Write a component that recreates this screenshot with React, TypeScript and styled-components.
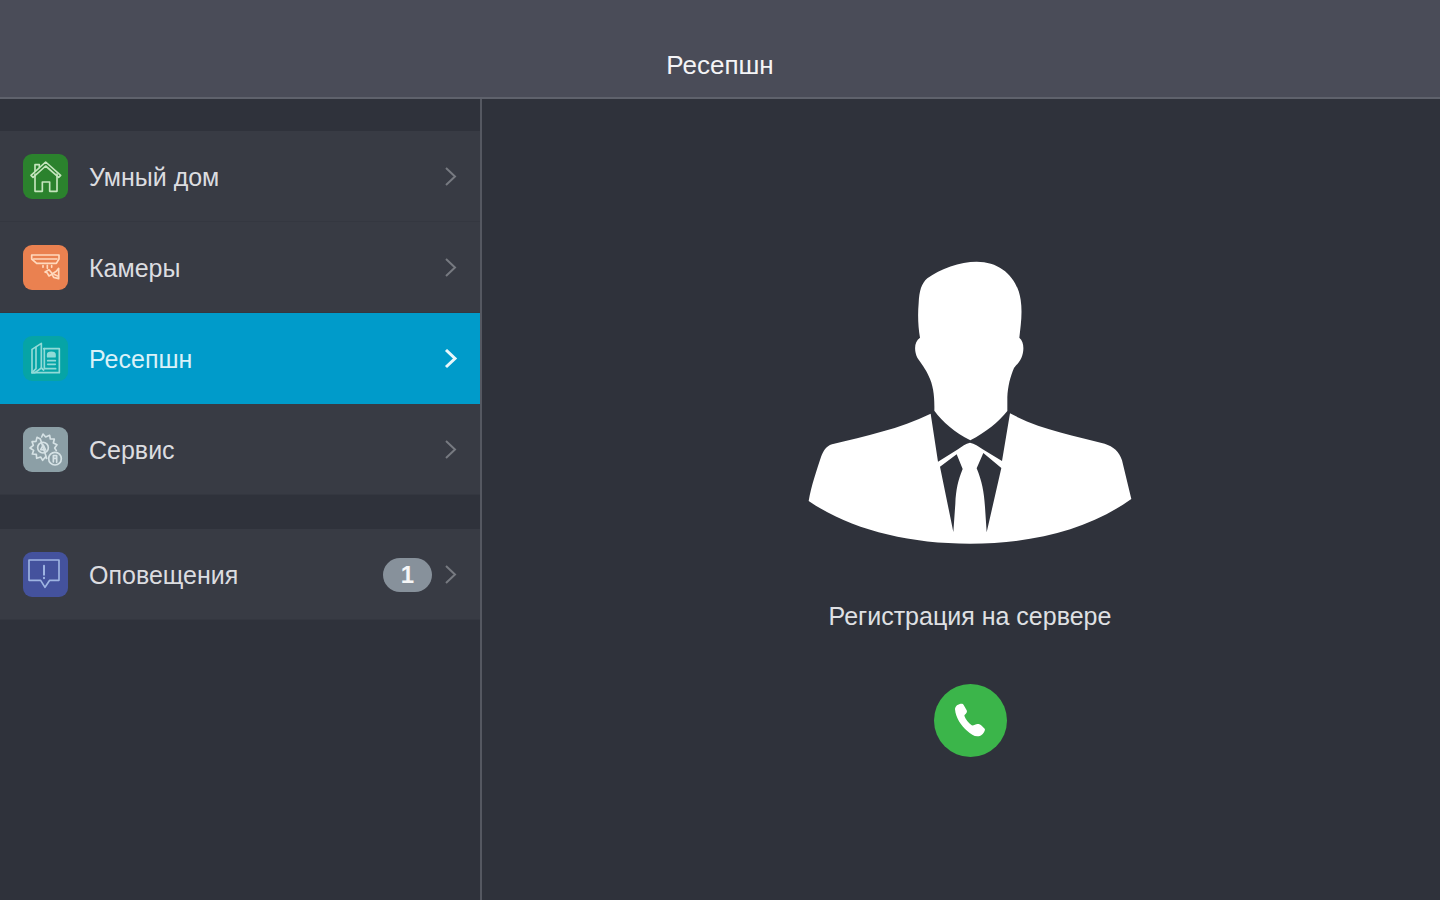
import React from "react";
import styled, { createGlobalStyle } from "styled-components";

const GlobalStyle = createGlobalStyle`
  *, *::before, *::after { box-sizing: border-box; }
  body {
    margin: 0;
    background: #2f323b;
    color: #dfe0e3;
    font-family: "Liberation Sans", Arial, sans-serif;
    font-size: 25px;
    line-height: 32px;
  }
`;

const Screen = styled.div`
  display: flex;
  flex-direction: column;
  min-height: 100vh;
`;

const Header = styled.header`
  display: flex;
  justify-content: center;
  padding: 49px 16px 16px;
  background: #4a4c58;
  border-bottom: 2px solid #5f626c;
`;

const Title = styled.h1`
  margin: 0;
  font-size: 26px;
  line-height: 32px;
  font-weight: 400;
  color: #f4f4f6;
`;

const Body = styled.div`
  display: grid;
  grid-template-columns: 1fr 2fr;
  flex: 1;
`;

const Sidebar = styled.nav`
  display: flex;
  flex-direction: column;
  gap: 34px;
  padding-top: 32px;
`;

const Menu = styled.ul`
  margin: 0;
  padding: 0;
  list-style: none;
`;

const MenuLink = styled.a<{ $active?: boolean }>`
  display: flex;
  align-items: center;
  height: 91px;
  padding: 0 22px 0 23px;
  text-decoration: none;
  color: ${(p) => (p.$active ? "#d9f1f8" : "#dcdde0")};
  background: ${(p) => (p.$active ? "#009bca" : "#383b44")};
  box-shadow: ${(p) => (p.$active ? "none" : "inset 0 -1px #343740")};
`;

const Tile = styled.svg<{ $color: string }>`
  flex: none;
  width: 45px;
  height: 45px;
  border-radius: 9px;
  background: ${(p) => p.$color};
  fill: none;
  stroke-linejoin: round;
  stroke-linecap: round;
`;

const Label = styled.span`
  flex: 1;
  margin-left: 21px;
`;

const Badge = styled.span`
  min-width: 49px;
  height: 34px;
  margin-right: 12px;
  border-radius: 17px;
  background: #87919b;
  color: #f5f6f7;
  font-size: 24px;
  line-height: 34px;
  font-weight: 700;
  text-align: center;
`;

const Chevron = styled.svg<{ $active?: boolean }>`
  flex: none;
  width: 14px;
  height: 20px;
  fill: none;
  stroke: ${(p) => (p.$active ? "#e8f7fb" : "#777a81")};
  stroke-width: ${(p) => (p.$active ? 3 : 2)};
`;

const Panel = styled.main`
  display: flex;
  flex-direction: column;
  align-items: center;
  padding: 162px 0 40px 18px;
  border-left: 2px solid #555861;
`;

const Avatar = styled.svg`
  width: 324px;
  height: 284px;
`;

const Status = styled.p`
  margin: 55px 0 52px;
`;

const CallButton = styled.button`
  width: 73px;
  height: 73px;
  padding: 0;
  border: 0;
  border-radius: 50%;
  background: #3bb54a;
  cursor: pointer;

  svg {
    display: block;
    width: 73px;
    height: 73px;
  }
`;

const HomeIcon = () => (
  <Tile $color="#2b822d" viewBox="24 24 135 135" stroke="#c5e5bd" strokeWidth="5" aria-hidden="true">
    <path d="M60 84V136H82V108H104V136H126V84" />
    <path d="M48 88L92 48L137 88L131 94L92 60L54 94Z" />
    <path d="M60 76V56H73V64" />
  </Tile>
);

const CameraIcon = () => (
  <Tile $color="#ea8150" viewBox="24 24 135 135" stroke="#ffd9bd" strokeWidth="5" aria-hidden="true">
    <path d="M50 54H132V66L124 79H65L50 66Z" />
    <path d="M56 66H126" />
    <path d="M84 86V91M97 85V94M110 86V91" />
    <path d="M90 105L102 98L112 110L124 103L131 94V125L116 121L111 112L102 117L96 107Z" />
    <path d="M117 112L128 117" />
  </Tile>
);

const ReceptionIcon = () => (
  <Tile $color="#06a4a6" viewBox="24 24 135 135" stroke="#91dad7" strokeWidth="5" aria-hidden="true">
    <path d="M51 64L79 46V120L60 134H51Z" />
    <path d="M63 58V122L51 134M79 120L86 126" />
    <path d="M86 62H133V134H52" />
    <path d="M88 62V122H122" />
    <path d="M98 80C98 71 120 71 120 80V86H98Z" fill="#91dad7" />
    <path d="M98 98H121M98 109H121" />
  </Tile>
);

const ServiceIcon = () => (
  <Tile $color="#8c9fa6" viewBox="24 24 135 135" stroke="#d6e2e5" strokeWidth="5" aria-hidden="true">
    <path d="M80 54L84 45L92 54L104 49L106 60L118 60L115 72L126 77L119 87L124 95M95 118L91 114L83 124L77 114L65 118L64 106L52 105L56 94L45 87L55 79L51 68L63 67L66 55L76 60Z" />
    <circle cx="84" cy="86" r="16" />
    <path d="M77 92L85 78L92 93Z" />
    <circle cx="120" cy="119" r="19" />
    <path d="M115 110V129M115 110H125V118H115M125 118V130" />
  </Tile>
);

const AlertIcon = () => (
  <Tile $color="#44529d" viewBox="24 24 135 135" stroke="#9eb4e2" strokeWidth="5" aria-hidden="true">
    <path d="M42 48H132V109H104L90 130L77 109H42Z" />
    <path d="M87 65V92M87 101V103" strokeWidth="6" />
  </Tile>
);

type ItemProps = {
  icon: React.ReactNode;
  label: string;
  href: string;
  active?: boolean;
  badge?: number;
};

const MenuItem = ({ icon, label, href, active, badge }: ItemProps) => (
  <li>
    <MenuLink href={href} $active={active} aria-current={active ? "page" : undefined}>
      {icon}
      <Label>{label}</Label>
      {badge !== undefined && <Badge>{badge}</Badge>}
      <Chevron $active={active} viewBox="0 0 14 20" aria-hidden="true">
        <path d="M2 1L11 9.500L2 18" />
      </Chevron>
    </MenuLink>
  </li>
);

export default function App() {
  return (
    <>
      <GlobalStyle />
      <Screen>
        <Header>
          <Title>Ресепшн</Title>
        </Header>
        <Body>
          <Sidebar>
            <Menu>
              <MenuItem icon={<HomeIcon />} label="Умный дом" href="#home" />
              <MenuItem icon={<CameraIcon />} label="Камеры" href="#cameras" />
              <MenuItem icon={<ReceptionIcon />} label="Ресепшн" href="#reception" active />
              <MenuItem icon={<ServiceIcon />} label="Сервис" href="#service" />
            </Menu>
            <Menu>
              <MenuItem icon={<AlertIcon />} label="Оповещения" href="#alerts" badge={1} />
            </Menu>
          </Sidebar>
          <Panel>
            <Avatar viewBox="24 32 972 852" fill="#ffffff" aria-hidden="true">
              <path d="M530 34C603 34 652 82 662 148C668 188 662 226 658 262C673 274 673 302 664 323C658 337 649 344 642 353C631 378 623 410 622 440V482C596 515 558 545 511 570C464 546 428 515 403 481C404 438 400 405 386 377C378 357 362 337 352 322C342 301 342 274 360 262C354 228 353 193 356 158C358 122 364 100 382 84C420 55 480 34 530 34Z" />
              <path d="M392 490L414 634L474 597C486 588 497 580 510 577C523 580 536 588 548 597L606 632L630 489C722 538 822 556 914 580C940 588 958 604 966 630L994 746C868 836 700 880 510 880C318 880 150 836 26 752C34 706 50 660 63 620C70 602 78 588 96 582C196 556 300 536 392 490ZM420 649L460 845L466 760C468 718 474 690 488 656L470 612ZM550 608L530 654C546 694 552 724 555 770L560 846L604 653Z" fillRule="evenodd" />
            </Avatar>
            <Status>Регистрация на сервере</Status>
            <CallButton type="button" aria-label="Позвонить">
              <svg viewBox="400 282 219 219" fill="#ffffff" aria-hidden="true">
                <path d="M463 358C463 348 472 341 484 341Q487 341 489 345L498 361C501 368 495 371 491 377C495 388 503 398 513 406C520 407 524 402 531 402C536 402 540 404 543 407L552 416Q554 419 552 422C548 432 541 439 530 439C520 439 510 431 499 422C482 408 465 384 463 358Z" />
              </svg>
            </CallButton>
          </Panel>
        </Body>
      </Screen>
    </>
  );
}
